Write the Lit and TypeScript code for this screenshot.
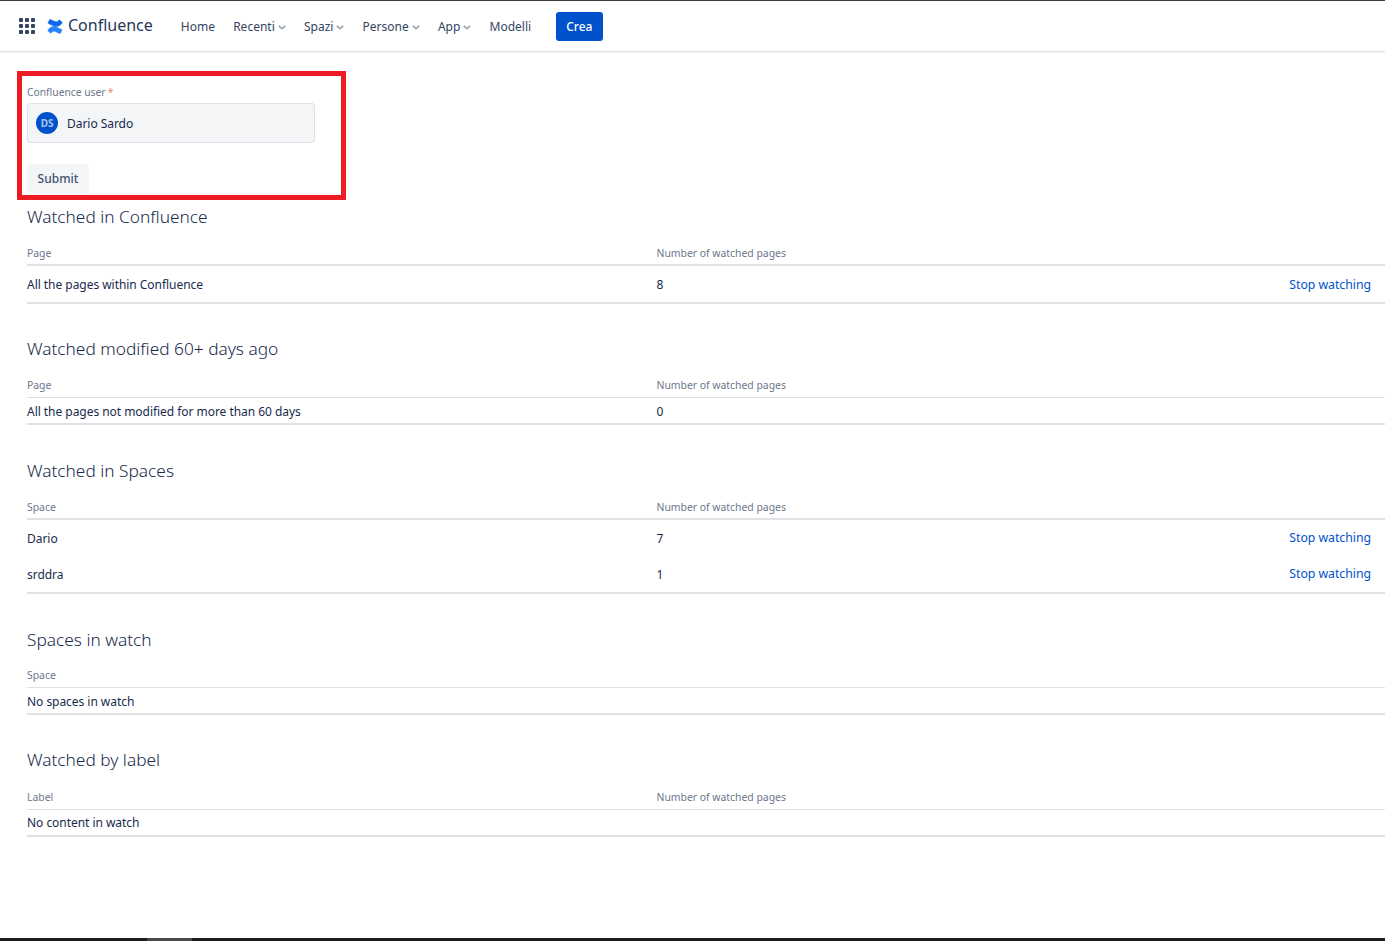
import { LitElement, html, css, nothing } from 'lit';
import { customElement } from 'lit/decorators.js';

interface Row {
  name: string;
  count?: string;
  stop?: boolean;
}

interface Section {
  title: string;
  first: string;
  second?: string;
  rows: Row[];
  cls: string;
}

const SECTIONS: Section[] = [
  {
    title: 'Watched in Confluence',
    first: 'Page',
    second: 'Number of watched pages',
    rows: [{ name: 'All the pages within Confluence', count: '8', stop: true }],
    cls: 'tall thick',
  },
  {
    title: 'Watched modified 60+ days ago',
    first: 'Page',
    second: 'Number of watched pages',
    rows: [{ name: 'All the pages not modified for more than 60 days', count: '0' }],
    cls: 'short',
  },
  {
    title: 'Watched in Spaces',
    first: 'Space',
    second: 'Number of watched pages',
    rows: [
      { name: 'Dario', count: '7', stop: true },
      { name: 'srddra', count: '1', stop: true },
    ],
    cls: 'tall thick spaces',
  },
  {
    title: 'Spaces in watch',
    first: 'Space',
    rows: [{ name: 'No spaces in watch' }],
    cls: 'short tight',
  },
  {
    title: 'Watched by label',
    first: 'Label',
    second: 'Number of watched pages',
    rows: [{ name: 'No content in watch' }],
    cls: 'short loose',
  },
];

const chevron = html`<svg class="chev" viewBox="0 0 10 6" width="8" height="5">
  <path d="M1 1l4 3.600L9 1" fill="none" stroke="#97a0af" stroke-width="2" />
</svg>`;

@customElement('app-root')
export class AppRoot extends LitElement {
  static styles = css`
    :host {
      display: block;
      font-family: 'Noto Sans', 'Open Sans', sans-serif;
      color: #172b4d;
      font-size: 12px;
    }

    .page {
      min-height: 941px;
      display: flex;
      flex-direction: column;
      box-sizing: border-box;
      background: #fff;
      border-top: 1px solid #3c3c3c;
    }

    header {
      height: 50px;
      display: flex;
      align-items: center;
      padding-left: 19px;
      flex: none;
      box-shadow: 0 1px 2px rgba(9, 30, 66, 0.2);
    }

    .apps {
      display: grid;
      grid-template-columns: repeat(3, 4px);
      gap: 2px;
      margin-right: 12px;
    }

    .apps i {
      width: 4px;
      height: 4px;
      border-radius: 1px;
      background: #344563;
    }

    .logo {
      margin-right: 5px;
    }

    .brand {
      font-size: 16px;
      color: #253858;
      margin-right: 28px;
      margin-top: -2px;
    }

    nav {
      display: flex;
      align-items: center;
      color: #344563;
    }

    nav span {
      display: flex;
      align-items: center;
      gap: 3px;
      margin-right: 18.2px;
    }

    .chev {
      margin-top: 2px;
    }

    .crea {
      background: #0052cc;
      color: #fff;
      border-radius: 3px;
      height: 29px;
      width: 47px;
      display: flex;
      align-items: center;
      justify-content: center;
      font-weight: 500;
      margin-left: 6.500px;
    }

    .form {
      margin: 20px 0 0 17px;
      width: 329px;
      height: 129px;
      box-sizing: border-box;
      border: 5px solid #ed1c24;
      padding: 9px 5px 0;
    }

    .label {
      font-size: 10.3px;
      line-height: 14px;
      color: #6b778c;
    }

    .label b {
      color: #e58a74;
      font-weight: 400;
      margin-left: 2px;
    }

    .user {
      margin-top: 4px;
      width: 288px;
      height: 40px;
      box-sizing: border-box;
      background: #f4f5f7;
      border: 1px solid #dfe1e6;
      border-radius: 3px;
      display: flex;
      align-items: center;
      gap: 9px;
      padding-left: 8px;
      letter-spacing: -0.04px;
    }

    .avatar {
      width: 22px;
      height: 22px;
      border-radius: 50%;
      background: #0052cc;
      color: #a9c4ee;
      font-size: 10px;
      font-weight: 700;
      display: flex;
      align-items: center;
      justify-content: center;
    }

    .submit {
      margin-top: 21px;
      width: 62px;
      height: 29px;
      background: #f4f5f7;
      border-radius: 3px;
      color: #42526e;
      font-weight: 500;
      display: flex;
      align-items: center;
      justify-content: center;
    }

    main {
      padding-left: 27px;
    }

    section h2 {
      margin: 0;
      font-size: 17.3px;
      font-weight: 300;
      line-height: 24px;
      color: #172b4d;
    }

    .grid-row {
      display: grid;
      grid-template-columns: 629.5px 1fr auto;
      align-items: center;
    }

    .head {
      margin-top: 13px;
      height: 24px;
      box-sizing: border-box;
      font-size: 10.4px;
      color: #6b778c;
      border-bottom: 1px solid #dfe1e6;
      padding-bottom: 1px;
    }

    .tight .head {
      margin-top: 12px;
    }

    .loose .head {
      margin-top: 14px;
    }

    .thick .head {
      border-bottom-width: 2px;
    }

    .rows {
      border-bottom: 2px solid #dfe1e6;
      letter-spacing: -0.04px;
    }

    .tall .cell {
      height: 36px;
    }

    .short .cell {
      height: 25px;
      padding-top: 2px;
      box-sizing: border-box;
    }

    .loose .cell {
      padding-top: 0;
    }

    .stop {
      color: #0052cc;
      font-size: 12.3px;
      margin-right: 14px;
    }

    .spaces .stop {
      margin-bottom: 2px;
    }

    .bar {
      margin-top: auto;
      height: 3px;
      flex: none;
      background: #1d1d22;
      padding-left: 147px;
    }

    .bar i {
      display: block;
      width: 45px;
      height: 3px;
      background: #4a4a4e;
    }
  `;

  private renderSection(s: Section, top: number) {
    return html`
      <section class=${s.cls} style="margin-top: ${top}px">
        <h2>${s.title}</h2>
        <div class="grid-row head">
          <span>${s.first}</span>
          <span>${s.second ?? nothing}</span>
        </div>
        <div class="rows">
          ${s.rows.map(
            (r) => html`
              <div class="grid-row cell">
                <span>${r.name}</span>
                <span>${r.count ?? nothing}</span>
                ${r.stop ? html`<span class="stop">Stop watching</span>` : nothing}
              </div>
            `
          )}
        </div>
      </section>
    `;
  }

  render() {
    const tops = [5, 33, 34, 34, 33];
    return html`
      <div class="page">
        <header>
          <div class="apps">${Array.from({ length: 9 }, () => html`<i></i>`)}</div>
          <svg class="logo" viewBox="0 0 16 16" width="16" height="15" preserveAspectRatio="none">
            <path d="M1 11.600c2.600-3.600 5.800-4.400 9.200-2.600l4.400 2.100c.3.2.4.5.3.8l-1.500 3.300c-.1.3-.5.4-.8.3L8.700 13.500c-1.700-.8-3.200-.6-4.500 1.300-.2.3-.6.3-.8.1L1 12.500c-.2-.2-.2-.6 0-.9z" fill="#2684ff" stroke="#2684ff" stroke-width=".6" />
            <path d="M15 4.400c-2.600 3.600-5.800 4.400-9.200 2.600L1.400 4.900c-.3-.2-.4-.5-.3-.8l1.500-3.300c.1-.3.5-.4.8-.3l3.900 2c1.700.8 3.200.6 4.500-1.300.2-.3.6-.3.8-.1L15 3.500c.2.200.2.600 0 .9z" fill="#1068e8" stroke="#1068e8" stroke-width=".6" />
          </svg>
          <div class="brand">Confluence</div>
          <nav>
            <span>Home</span>
            <span>Recenti${chevron}</span>
            <span>Spazi${chevron}</span>
            <span>Persone${chevron}</span>
            <span>App${chevron}</span>
            <span>Modelli</span>
            <div class="crea">Crea</div>
          </nav>
        </header>
        <div class="form">
          <div class="label">Confluence user<b>*</b></div>
          <div class="user">
            <div class="avatar">DS</div>
            <span>Dario Sardo</span>
          </div>
          <div class="submit">Submit</div>
        </div>
        <main>${SECTIONS.map((s, i) => this.renderSection(s, tops[i]))}</main>
        <div class="bar"><i></i></div>
      </div>
    `;
  }
}
